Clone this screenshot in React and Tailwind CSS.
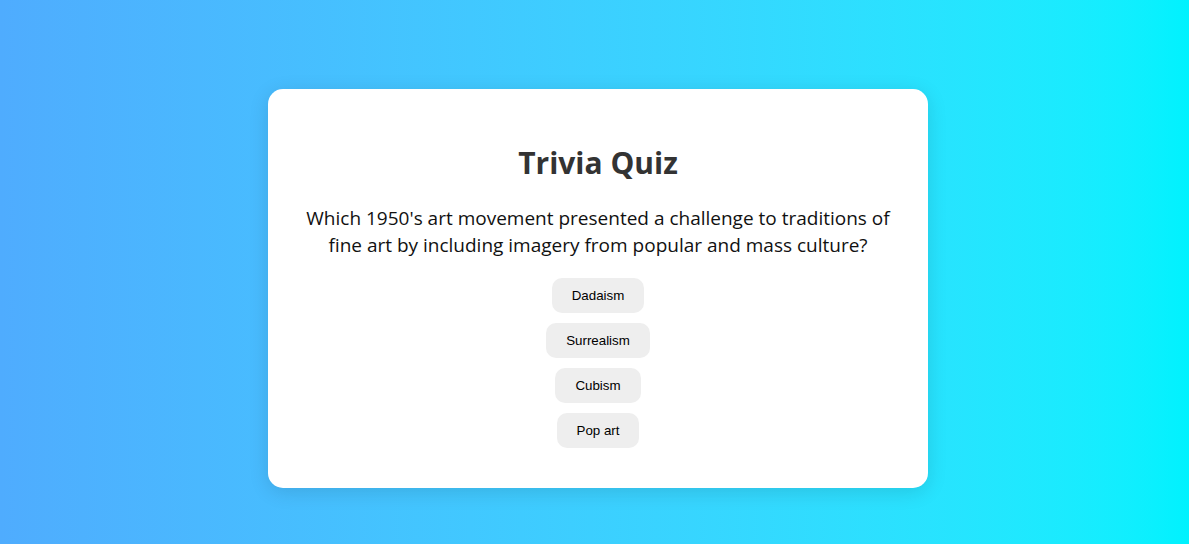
import React from 'react';

const question = {
    text: "Which 1950's art movement presented a challenge to traditions of fine art by including imagery from popular and mass culture?",
    options: ['Dadaism', 'Surrealism', 'Cubism', 'Pop art'],
};

const App = () => {
    return (
        <div className="min-h-[544px] w-full flex items-start justify-center pt-[89px] pl-[7px] bg-gradient-to-r from-[#4facfe] to-[#00f2fe]">
            <div
                className="w-[660px] bg-white rounded-[15px] px-[30px] pt-[30px] pb-[40px] shadow-[0_4px_20px_rgba(0,0,0,0.12)] text-center"
                style={{ fontFamily: '"Open Sans", "Noto Sans", sans-serif' }}
            >
                {/* タイトル */}
                <h1 className="mt-[25px] text-[30px] leading-[38px] font-bold text-[#333]">
                    Trivia Quiz
                </h1>

                {/* 質問 */}
                <p className="mt-[23px] text-[19px] leading-[27px] text-[#111]">
                    {question.text}
                </p>

                {/* 選択肢 */}
                <div className="mt-[19px] flex flex-col items-center gap-[10px]">
                    {question.options.map((opt) => (
                        <button
                            key={opt}
                            className="h-[35px] px-5 rounded-[10px] bg-[#eeeeee] text-[13.33px] text-black hover:bg-[#ddd]"
                            style={{ fontFamily: '"Liberation Sans", Arial, sans-serif' }}
                        >
                            {opt}
                        </button>
                    ))}
                </div>
            </div>
        </div>
    );
};

export default App;
